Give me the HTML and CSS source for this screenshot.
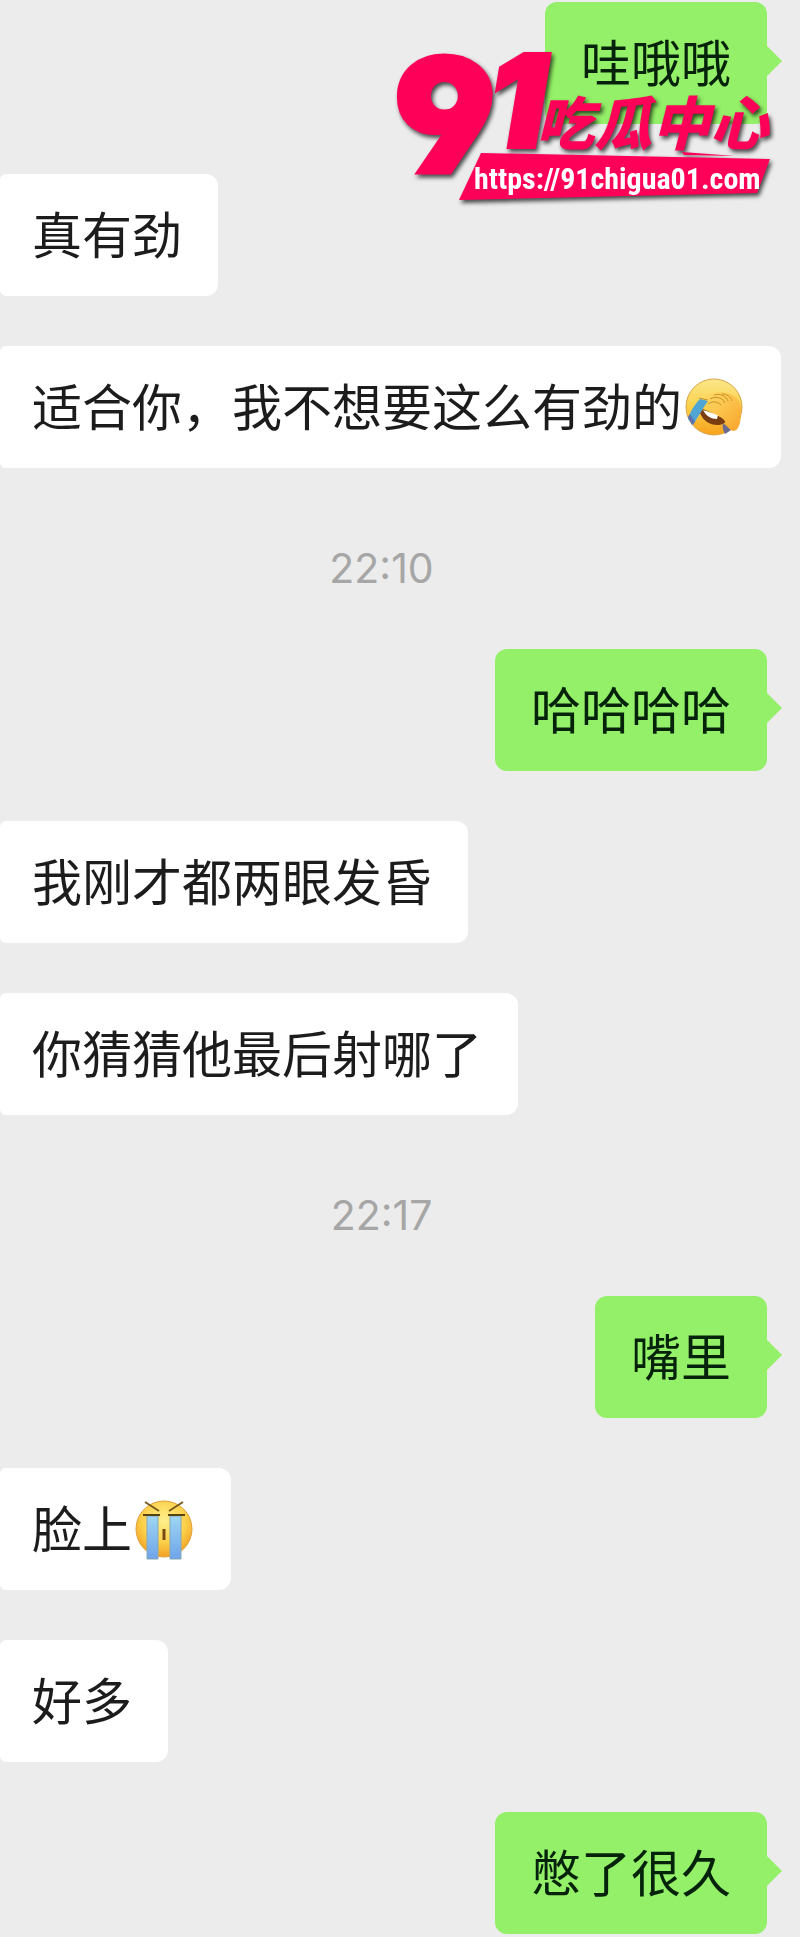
FILE: index.html
```html
<!DOCTYPE html>
<html lang="zh-CN">
<head>
    <meta charset="UTF-8">
    <meta name="viewport" content="width=device-width, initial-scale=1.0">
    <title>聊天记录</title>
    <link rel="stylesheet" href="styles.css">
</head>
<body>

    <main class="chat">
        <div class="bubble sent">哇哦哦</div>
        <div class="bubble">真有劲</div>
        <div class="bubble">适合你，我不想要这么有劲的<svg class="emoji" viewBox="0 0 57 57" role="img" aria-label="捂脸">
            <defs>
                <linearGradient id="face" x1="0" y1="0" x2="0" y2="1">
                    <stop offset="0" stop-color="#fbe78a"/>
                    <stop offset="0.5" stop-color="#fbd04a"/>
                    <stop offset="1" stop-color="#f7a11c"/>
                </linearGradient>
                <linearGradient id="hand" x1="0" y1="0" x2="1" y2="1">
                    <stop offset="0" stop-color="#fde06a"/>
                    <stop offset="1" stop-color="#f9a42c"/>
                </linearGradient>
            </defs>
            <circle cx="28" cy="28" r="28" fill="url(#face)" stroke="#d9a548" stroke-width="1"/>
            <path d="M14 34c3 8 10 12 17 12 5 0 8-2 10-5L17 30z" fill="#7a3d12"/>
            <path d="M17 31l15 5-1 4c-6 0-11-3-14-9z" fill="#fff"/>
            <path d="M2 40c3-9 7-15 12-20l8 2C17 29 12 38 7 46z" fill="#4fa5d4"/>
            <path d="M2 38l4 8 3-3-5-8z" fill="#5f6fae"/>
            <path d="M37 44l8 7-6 4c-2-4-3-7-2-11z" fill="#6a6a92"/>
            <path d="M13 19c4-3 8-4 13-5 8-2 16-1 22 3 6 4 8 11 7 20-1 9-3 15-8 15-4 0-6-9-11-13-6-4-12-6-14-11-1-3 2-5-1-7z" fill="url(#hand)"/>
            <path d="M13 19l9 2M22 25c4-3 9-3 13 1M24 20c5-3 12-2 15 4M28 16c6-2 12 1 14 6M36 15c5 0 9 3 10 7" fill="none" stroke="#c9902a" stroke-width="1"/>
        </svg></div>
        <time class="time">22:10</time>
        <div class="bubble sent">哈哈哈哈</div>
        <div class="bubble">我刚才都两眼发昏</div>
        <div class="bubble">你猜猜他最后射哪了</div>
        <time class="time">22:17</time>
        <div class="bubble sent">嘴里</div>
        <div class="bubble">脸上<svg class="emoji" viewBox="0 0 57 57" role="img" aria-label="大哭">
            <defs>
                <radialGradient id="cry" cx="0.5" cy="0.35" r="0.65">
                    <stop offset="0" stop-color="#fdf08e"/>
                    <stop offset="0.6" stop-color="#fbd04a"/>
                    <stop offset="1" stop-color="#f3a024"/>
                </radialGradient>
                <linearGradient id="tear" x1="0" y1="0" x2="0" y2="1">
                    <stop offset="0" stop-color="#9fd6f2"/>
                    <stop offset="1" stop-color="#6ea4ea"/>
                </linearGradient>
            </defs>
            <circle cx="28" cy="28" r="28" fill="url(#cry)" stroke="#dfa03a" stroke-width="1"/>
            <path d="M11 15h11v43H11zM34 15h11v43H34z" fill="url(#tear)" stroke="#86a9b8" stroke-width="1"/>
            <path d="M9 1l14 9M47 1L33 10" fill="none" stroke="#7a5a1e" stroke-width="2"/>
            <path d="M7 14h17M32 14h17" fill="none" stroke="#59430f" stroke-width="2"/>
            <path d="M28 28v11" fill="none" stroke="#7a4a12" stroke-width="3"/>
        </svg></div>
        <div class="bubble">好多</div>
        <div class="bubble sent">憋了很久</div>
    </main>

    <svg class="watermark" viewBox="0 0 390 165">
        <text class="nine" x="4" y="127">9</text>
        <text class="one" x="98" y="102">1</text>
        <text class="brand" x="146" y="100">吃瓜中心</text>
        <path d="M91 108L380 114 367 148 69 155zM292 107l53 4-51-1z"/>
        <a href="https://91chigua01.com"><text class="url" x="84" y="144">https://91chigua01.com</text></a>
    </svg>

</body>
</html>
```

FILE: styles.css
```css
* {
    box-sizing: border-box;
}

body {
    position: relative;
    margin: 0;
    background-color: #ececec;
    font-family: "Noto Sans CJK SC", sans-serif;
}

.chat {
    display: flex;
    flex-direction: column;
    align-items: flex-start;
    gap: 50px;
    padding: 2px 33px 3px 0;
}

.bubble {
    position: relative;
    flex-shrink: 0;
    margin-right: -18px;
    padding: 22px 36px 28px 32px;
    border-radius: 6px 12px 12px 6px;
    background-color: #fff;
    color: #1c1c1c;
    font-size: 50px;
    line-height: 72px;
}

.sent {
    align-self: flex-end;
    margin-right: 0;
    padding-left: 36px;
    border-radius: 12px;
    background-color: #94f068;
    color: #04230a;
}

/* little arrow on the right side */
.sent::after {
    content: "";
    position: absolute;
    top: 44px;
    left: 100%;
    border: 15px solid transparent;
    border-right: 0;
    border-left-color: #94f068;
}

.emoji {
    width: 57px;
    height: 57px;
    margin: 0 2px 0 4px;
    vertical-align: -10px;
    overflow: visible;
}

.time {
    align-self: center;
    padding: 20px 4px 0 0;
    color: #a6a6a6;
    font-family: Inter, sans-serif;
    font-size: 41px;
    line-height: 61px;
}

.watermark {
    position: absolute;
    top: 45px;
    right: 20px;
    width: 390px;
    height: 165px;
    overflow: visible;
    fill: #ff0059;
    filter: drop-shadow(2px 3px 2px rgba(0, 0, 0, 0.7));
}

/* open digit with the straight tail */
.nine {
    font: 900 158px Inter, sans-serif;
    font-feature-settings: "ss01";
    stroke: #ff0059;
    stroke-width: 5px;
}

.one {
    font: italic 900 128px Inter, sans-serif;
    stroke: #ff0059;
    stroke-width: 4px;
}

.brand {
    font: italic 900 58px "Noto Sans CJK SC", sans-serif;
}

.url {
    fill: #fff;
    font: bold 30px "Liberation Sans Narrow", "Roboto Condensed", Roboto, sans-serif;
}
```
